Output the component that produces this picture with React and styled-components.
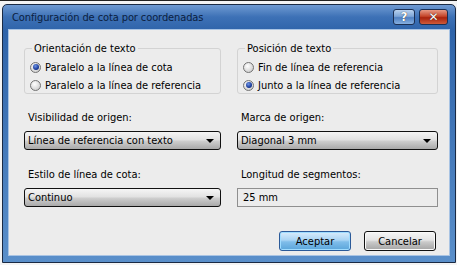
import styled, { createGlobalStyle } from 'styled-components'

const Global = createGlobalStyle`
  html, body {
    margin: 0;
    padding: 0;
    background: #ffffff;
    width: 457px;
    height: 265px;
    overflow: hidden;
  }
  body {
    font-family: Tahoma, "DejaVu Sans Condensed", "DejaVu Sans", sans-serif;
    font-size: 11px;
    color: #000;
  }
`

const Screen = styled.div`
  width: 457px;
  height: 265px;
  box-sizing: border-box;
  padding: 3px 1px 2px 2px;
  border-top: 1px solid #222;
  background: #f4f4f4;
`

const Window = styled.div`
  height: 100%;
  box-sizing: border-box;
  border: 1px solid #1a2a44;
  border-radius: 5px 5px 0 0;
  background: linear-gradient(180deg, #6f9ad2 0px, #3d71b6 12px, #2e63a9 26px, #5a8fca 100%);
  padding: 0 5px 6px 5px;
  display: flex;
  flex-direction: column;
`

const TitleBar = styled.div`
  height: 24px;
  display: flex;
  align-items: center;
  justify-content: space-between;
  padding: 0 2px 0 4px;
`

const Title = styled.div`
  font-family: "DejaVu Sans Condensed", "DejaVu Sans", sans-serif;
  font-size: 11px;
  letter-spacing: -0.1px;
  color: #0b1e3f;
`

const Caps = styled.div`
  display: flex;
  gap: 4px;
  align-items: center;
`

const CapButton = styled.div`
  width: ${p => p.$w}px;
  height: 16px;
  box-sizing: border-box;
  border: 1px solid #1c2f52;
  border-radius: 3px;
  background: ${p => p.$red
    ? 'linear-gradient(180deg, #e79a86 0%, #c5452a 45%, #a8230e 55%, #cf5b3a 100%)'
    : 'linear-gradient(180deg, #b9d2ef 0%, #7ea6d8 45%, #4f80c2 55%, #87b0e0 100%)'};
  display: flex;
  align-items: center;
  justify-content: center;
  color: #fff;
  font-weight: bold;
  font-size: 12px;
  font-family: "DejaVu Sans", sans-serif;
  text-shadow: 0 0 1px #000;
`

const Client = styled.div`
  flex: 1;
  background: #ececec;
  border: 1px solid #a9c4e4;
  padding: 12px 14px 0 15px;
  display: flex;
  flex-direction: column;
`

const Columns = styled.div`
  display: grid;
  grid-template-columns: 197px 201px;
  column-gap: 18px;
`

const Column = styled.div`
  display: flex;
  flex-direction: column;
`

const Group = styled.fieldset`
  margin: 0;
  padding: 3px 0 5px 5px;
  border: 1px solid #d3d3d3;
  border-radius: 3px;
  height: 52px;
  box-sizing: border-box;
  ${p => p.$right && 'margin-left: -2px; width: 201px;'}
`

const Legend = styled.legend`
  padding: 0 2px;
  margin-left: 2px;
  font-size: 11px;
`

const Radio = styled.div`
  display: flex;
  align-items: center;
  gap: 4px;
  height: 18px;
`

const Dot = styled.span`
  width: 11px;
  height: 11px;
  border-radius: 50%;
  box-sizing: border-box;
  border: 1px solid #737373;
  background: radial-gradient(circle at 40% 35%, #ffffff 0%, #d4d4d4 70%, #b8b8b8 100%);
  display: flex;
  align-items: center;
  justify-content: center;
  &::after {
    content: '';
    display: ${p => (p.$on ? 'block' : 'none')};
    width: 6px;
    height: 6px;
    border-radius: 50%;
    background: radial-gradient(circle at 40% 35%, #6e95e6 0%, #1b3c9b 60%, #0c1f5c 100%);
  }
`

const Field = styled.div`
  display: flex;
  flex-direction: column;
  margin-top: ${p => p.$top}px;
  ${p => p.$right && 'margin-left: -2px;'}
`

const Label = styled.div`
  padding-left: 4px;
  height: 16px;
  line-height: 16px;
  margin-bottom: 5px;
`

const Combo = styled.div`
  height: 19px;
  box-sizing: border-box;
  border: 1px solid #111;
  border-radius: 3px;
  background: linear-gradient(180deg, #f5f5f5 0%, #e2e2e2 45%, #cdcdcd 55%, #a9a9a9 100%);
  display: flex;
  align-items: center;
  justify-content: space-between;
  padding: 0 6px 0 3px;
  width: ${p => p.$w}px;
`

const Arrow = styled.span`
  width: 0;
  height: 0;
  border-left: 4px solid transparent;
  border-right: 4px solid transparent;
  border-top: 4px solid #000;
`

const TextBox = styled.div`
  height: 19px;
  box-sizing: border-box;
  border: 1px solid #8f8f8f;
  background: #ececec;
  display: flex;
  align-items: center;
  padding-left: 5px;
  width: ${p => p.$w}px;
`

const Footer = styled.div`
  display: flex;
  justify-content: flex-end;
  gap: 13px;
  margin-top: 24px;
  margin-right: -1px;
`

const Button = styled.div`
  width: 72px;
  height: 20px;
  box-sizing: border-box;
  border-radius: 3px;
  display: flex;
  align-items: center;
  justify-content: center;
  border: 1px solid ${p => (p.$default ? '#2b5a99' : '#111')};
  background: ${p => p.$default
    ? 'linear-gradient(180deg, #d9ecfb 0%, #a9d4f4 45%, #7fbdea 55%, #5aa5da 100%)'
    : 'linear-gradient(180deg, #f6f6f6 0%, #e4e4e4 45%, #cacaca 55%, #a4a4a4 100%)'};
  box-shadow: ${p => (p.$default ? 'inset 0 0 0 1px #9fdcff' : 'inset 0 0 0 1px #fafafa')};
`

export default function App() {
  return (
    <Screen>
      <Global />
      <Window>
        <TitleBar>
          <Title>Configuración de cota por coordenadas</Title>
          <Caps>
            <CapButton $w={22}>?</CapButton>
            <CapButton $w={29} $red>✕</CapButton>
          </Caps>
        </TitleBar>
        <Client>
          <Columns>
            <Column>
              <Group>
                <Legend>Orientación de texto</Legend>
                <Radio><Dot $on />Paralelo a la línea de cota</Radio>
                <Radio><Dot />Paralelo a la línea de referencia</Radio>
              </Group>
              <Field $top={16}>
                <Label>Visibilidad de origen:</Label>
                <Combo $w={197}>Línea de referencia con texto<Arrow /></Combo>
              </Field>
              <Field $top={17}>
                <Label>Estilo de línea de cota:</Label>
                <Combo $w={197}>Continuo<Arrow /></Combo>
              </Field>
            </Column>
            <Column>
              <Group $right>
                <Legend>Posición de texto</Legend>
                <Radio><Dot />Fin de línea de referencia</Radio>
                <Radio><Dot $on />Junto a la línea de referencia</Radio>
              </Group>
              <Field $top={16} $right>
                <Label>Marca de origen:</Label>
                <Combo $w={201}>Diagonal 3 mm<Arrow /></Combo>
              </Field>
              <Field $top={17} $right>
                <Label>Longitud de segmentos:</Label>
                <TextBox $w={201}>25 mm</TextBox>
              </Field>
            </Column>
          </Columns>
          <Footer>
            <Button $default>Aceptar</Button>
            <Button>Cancelar</Button>
          </Footer>
        </Client>
      </Window>
    </Screen>
  )
}
